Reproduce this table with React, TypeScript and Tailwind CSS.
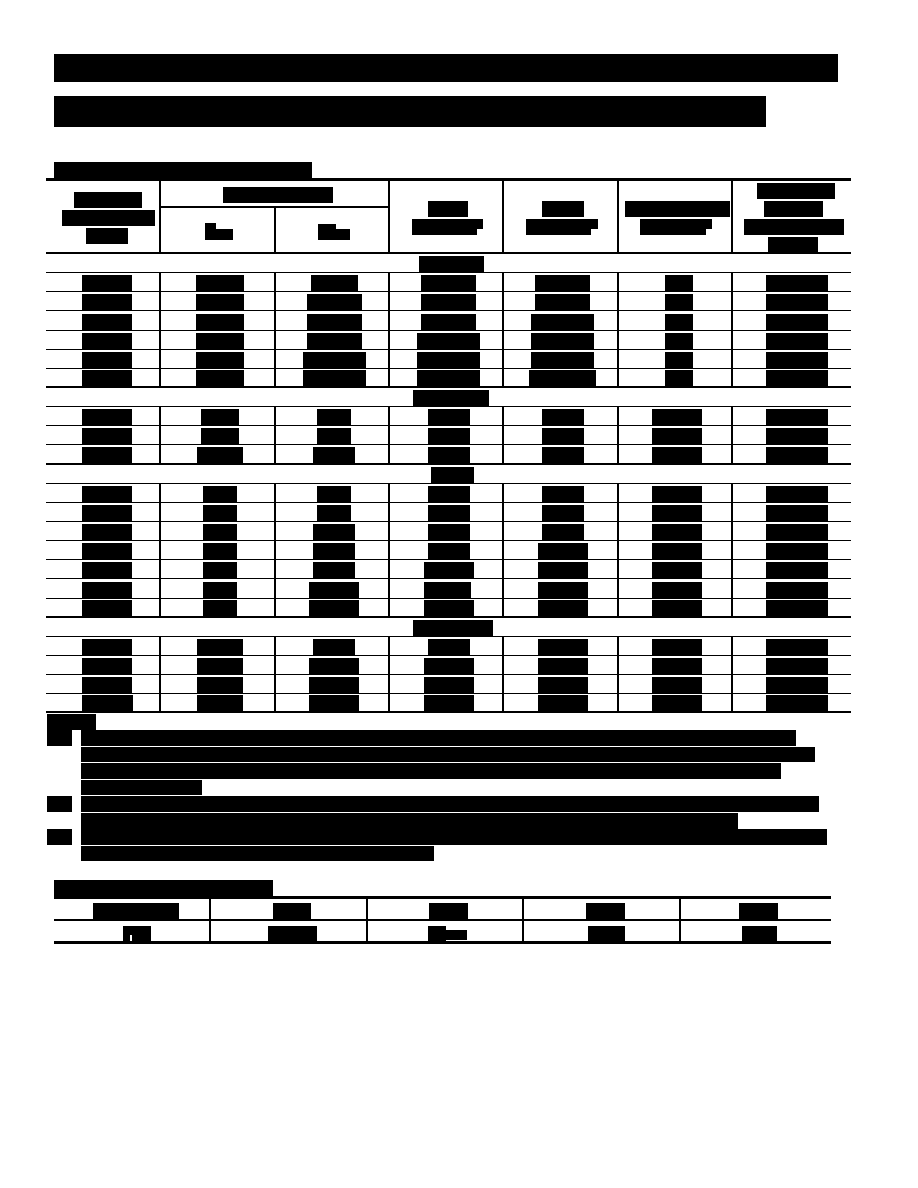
import type React from 'react';

// Redacted spec sheet: every text run is blacked out, so the page is drawn as bars.

const COLS = 'grid grid-cols-[113px_115px_114px_114px_115px_114px_120px]';

const A = 'ml-[36px] w-[50px]';
const G = 'ml-[33px] w-[62px]';

interface Section {
  head: string;
  rows: string[][];
}

const sections: Section[] = [
  {
    head: 'ml-[373px] w-[65px]',
    rows: [
      [A, 'ml-[35px] w-[48px]', 'ml-[35px] w-[47px]', 'ml-[31px] w-[55px]', 'ml-[31px] w-[55px]', 'ml-[46px] w-[28px]', G],
      [A, 'ml-[35px] w-[48px]', 'ml-[31px] w-[55px]', 'ml-[31px] w-[55px]', 'ml-[31px] w-[55px]', 'ml-[46px] w-[28px]', G],
      [A, 'ml-[35px] w-[48px]', 'ml-[31px] w-[55px]', 'ml-[31px] w-[55px]', 'ml-[27px] w-[63px]', 'ml-[46px] w-[28px]', G],
      [A, 'ml-[35px] w-[48px]', 'ml-[31px] w-[55px]', 'ml-[27px] w-[63px]', 'ml-[27px] w-[63px]', 'ml-[46px] w-[28px]', G],
      [A, 'ml-[35px] w-[48px]', 'ml-[27px] w-[63px]', 'ml-[27px] w-[63px]', 'ml-[27px] w-[63px]', 'ml-[46px] w-[28px]', G],
      [A, 'ml-[35px] w-[48px]', 'ml-[27px] w-[63px]', 'ml-[27px] w-[63px]', 'ml-[25px] w-[67px]', 'ml-[46px] w-[28px]', G],
    ],
  },
  {
    head: 'ml-[367px] w-[76px]',
    rows: [
      [A, 'ml-[40px] w-[38px]', 'ml-[41px] w-[34px]', 'ml-[38px] w-[42px]', 'ml-[38px] w-[42px]', 'ml-[33px] w-[50px]', G],
      [A, 'ml-[40px] w-[38px]', 'ml-[41px] w-[34px]', 'ml-[38px] w-[42px]', 'ml-[38px] w-[42px]', 'ml-[33px] w-[50px]', G],
      [A, 'ml-[36px] w-[46px]', 'ml-[37px] w-[42px]', 'ml-[38px] w-[42px]', 'ml-[38px] w-[42px]', 'ml-[33px] w-[50px]', G],
    ],
  },
  {
    head: 'ml-[385px] w-[43px]',
    rows: [
      [A, 'ml-[42px] w-[34px]', 'ml-[41px] w-[34px]', 'ml-[38px] w-[42px]', 'ml-[38px] w-[42px]', 'ml-[33px] w-[50px]', G],
      [A, 'ml-[42px] w-[34px]', 'ml-[41px] w-[34px]', 'ml-[38px] w-[42px]', 'ml-[38px] w-[42px]', 'ml-[33px] w-[50px]', G],
      [A, 'ml-[42px] w-[34px]', 'ml-[37px] w-[42px]', 'ml-[38px] w-[42px]', 'ml-[38px] w-[42px]', 'ml-[33px] w-[50px]', G],
      [A, 'ml-[42px] w-[34px]', 'ml-[37px] w-[42px]', 'ml-[38px] w-[42px]', 'ml-[34px] w-[50px]', 'ml-[33px] w-[50px]', G],
      [A, 'ml-[42px] w-[34px]', 'ml-[37px] w-[42px]', 'ml-[34px] w-[50px]', 'ml-[34px] w-[50px]', 'ml-[33px] w-[50px]', G],
      [A, 'ml-[42px] w-[34px]', 'ml-[33px] w-[50px]', 'ml-[34px] w-[47px]', 'ml-[34px] w-[50px]', 'ml-[33px] w-[50px]', G],
      [A, 'ml-[42px] w-[34px]', 'ml-[33px] w-[50px]', 'ml-[34px] w-[50px]', 'ml-[34px] w-[50px]', 'ml-[33px] w-[50px]', G],
    ],
  },
  {
    head: 'ml-[367px] w-[80px]',
    rows: [
      [A, 'ml-[36px] w-[46px]', 'ml-[37px] w-[42px]', 'ml-[38px] w-[42px]', 'ml-[34px] w-[50px]', 'ml-[33px] w-[50px]', G],
      [A, 'ml-[36px] w-[46px]', 'ml-[33px] w-[50px]', 'ml-[34px] w-[50px]', 'ml-[34px] w-[50px]', 'ml-[33px] w-[50px]', G],
      [A, 'ml-[36px] w-[46px]', 'ml-[33px] w-[50px]', 'ml-[34px] w-[50px]', 'ml-[34px] w-[50px]', 'ml-[33px] w-[50px]', G],
      ['ml-[36px] w-[51px]', 'ml-[36px] w-[46px]', 'ml-[33px] w-[50px]', 'ml-[34px] w-[50px]', 'ml-[34px] w-[50px]', 'ml-[33px] w-[50px]', G],
    ],
  },
];

// note lines: [line slot, bar] — marker shown on the first line of each note
const notes: { lines: [string, string][] }[] = [
  {
    lines: [
      ['h-[17px]', 'h-[16px] w-[715px]'],
      ['h-[16px]', 'h-[15px] w-[734px]'],
      ['h-[17px]', 'h-[16px] w-[700px]'],
      ['h-[16px]', 'h-[15px] w-[121px]'],
    ],
  },
  {
    lines: [
      ['h-[17px]', 'h-[16px] w-[738px]'],
      ['h-[16px]', 'h-[16px] w-[657px]'],
    ],
  },
  {
    lines: [
      ['h-[17px]', 'h-[16px] w-[746px]'],
      ['h-[16px]', 'h-[15px] w-[353px]'],
    ],
  },
];

const Bar: React.FC<{ className: string }> = ({ className }) => (
  <span className={`block bg-black ${className}`} />
);

const HeaderRow: React.FC = () => (
  <div className="flex h-[73px] border-b-2 border-black">
    {/* col 1 */}
    <div className="w-[113px] flex flex-col items-start gap-[2px] pt-[11px]">
      <Bar className="ml-[28px] w-[68px] h-[16px]" />
      <Bar className="ml-[16px] w-[93px] h-[16px]" />
      <Bar className="ml-[40px] w-[42px] h-[16px]" />
    </div>

    {/* col 2-3 grouped */}
    <div className="w-[229px] border-l-2 border-black flex flex-col">
      <div className="h-[27px] border-b-2 border-black pt-[6px]">
        <Bar className="ml-[62px] w-[110px] h-[16px]" />
      </div>
      <div className="flex flex-1">
        <div className="w-[113px] pt-[15px]">
          <div className="ml-[44px] flex items-end">
            <Bar className="w-[11px] h-[17px]" />
            <Bar className="w-[17px] h-[11px]" />
          </div>
        </div>
        <div className="w-[114px] border-l-2 border-black pt-[16px]">
          <div className="ml-[42px] flex items-end">
            <Bar className="w-[18px] h-[16px]" />
            <Bar className="w-[14px] h-[11px]" />
          </div>
        </div>
      </div>
    </div>

    {/* col 4 */}
    <div className="w-[114px] border-l-2 border-black flex flex-col items-start gap-[2px] pt-[20px]">
      <Bar className="ml-[38px] w-[40px] h-[16px]" />
      <div className="ml-[22px] flex items-start">
        <Bar className="w-[65px] h-[16px]" />
        <Bar className="w-[6px] h-[10px]" />
      </div>
    </div>

    {/* col 5 */}
    <div className="w-[115px] border-l-2 border-black flex flex-col items-start gap-[2px] pt-[20px]">
      <Bar className="ml-[38px] w-[42px] h-[16px]" />
      <div className="ml-[22px] flex items-start">
        <Bar className="w-[65px] h-[16px]" />
        <Bar className="w-[7px] h-[10px]" />
      </div>
    </div>

    {/* col 6 */}
    <div className="w-[114px] border-l-2 border-black flex flex-col items-start gap-[2px] pt-[20px]">
      <Bar className="ml-[6px] w-[105px] h-[16px]" />
      <div className="ml-[21px] flex items-start">
        <Bar className="w-[66px] h-[16px]" />
        <Bar className="w-[6px] h-[10px]" />
      </div>
    </div>

    {/* col 7 */}
    <div className="w-[120px] border-l-2 border-black flex flex-col items-start gap-[2px] pt-[2px]">
      <Bar className="ml-[24px] w-[78px] h-[16px]" />
      <Bar className="ml-[31px] w-[59px] h-[16px]" />
      <Bar className="ml-[11px] w-[100px] h-[16px]" />
      <Bar className="ml-[35px] w-[50px] h-[15px]" />
    </div>
  </div>
);

export default function App() {
  return (
    <div className="w-[918px] h-[1188px] bg-white overflow-hidden font-['Liberation_Sans',sans-serif]">
      {/* title */}
      <Bar className="mt-[54px] ml-[54px] w-[784px] h-[28px]" />
      <Bar className="mt-[14px] ml-[54px] w-[712px] h-[31px]" />

      {/* main table caption */}
      <Bar className="mt-[35px] ml-[54px] w-[258px] h-[16px]" />

      <div className="ml-[46px] w-[805px] border-t-[3px] border-black">
        <HeaderRow />
        {sections.map((sec, si) => (
          <div key={si}>
            <div className="h-[19.15px] border-b border-black flex items-end">
              <Bar className={`h-[16px] ${sec.head}`} />
            </div>
            {sec.rows.map((row, ri) => (
              <div
                key={ri}
                className={
                  ri === sec.rows.length - 1
                    ? `${COLS} h-[19.15px] border-b-2 border-black`
                    : `${COLS} h-[19.15px] border-b border-black`
                }
              >
                {row.map((cls, ci) => (
                  <div
                    key={ci}
                    className={ci === 0 ? 'flex items-end' : 'flex items-end border-l-2 border-black'}
                  >
                    <Bar className={`h-[16px] ${cls}`} />
                  </div>
                ))}
              </div>
            ))}
          </div>
        ))}
      </div>

      {/* notes */}
      <div className="ml-[47px] mt-[1px]">
        <Bar className="w-[49px] h-[16px]" />
        {notes.map((n, ni) => (
          <div key={ni} className="flex">
            <div className="w-[34px]">
              <Bar className="w-[25px] h-[16px]" />
            </div>
            <div>
              {n.lines.map(([slot, bar], li) => (
                <div key={li} className={slot}>
                  <Bar className={bar} />
                </div>
              ))}
            </div>
          </div>
        ))}
      </div>

      {/* second table */}
      <Bar className="mt-[18px] ml-[54px] w-[219px] h-[16px]" />
      <div className="ml-[54px] w-[777px] border-t-[3px] border-black">
        <div className="flex h-[22px] border-b-2 border-black">
          <div className="w-[155px] flex items-end">
            <Bar className="ml-[39px] w-[86px] h-[16px]" />
          </div>
          <div className="w-[157px] border-l-2 border-black flex items-end">
            <Bar className="ml-[62px] w-[38px] h-[16px]" />
          </div>
          <div className="w-[156px] border-l-2 border-black flex items-end">
            <Bar className="ml-[61px] w-[39px] h-[16px]" />
          </div>
          <div className="w-[157px] border-l-2 border-black flex items-end">
            <Bar className="ml-[62px] w-[39px] h-[16px]" />
          </div>
          <div className="w-[152px] border-l-2 border-black flex items-end">
            <Bar className="ml-[58px] w-[39px] h-[16px]" />
          </div>
        </div>
        <div className="flex h-[23px] border-b-[3px] border-black">
          <div className="w-[155px] flex items-end">
            <div className="ml-[69px] flex items-start">
              <Bar className="w-[7px] h-[15px]" />
              <Bar className="w-[2px] h-[9px]" />
              <Bar className="w-[19px] h-[15px]" />
            </div>
          </div>
          <div className="w-[157px] border-l-2 border-black flex items-end">
            <Bar className="ml-[57px] w-[49px] h-[15px]" />
          </div>
          <div className="w-[156px] border-l-2 border-black flex items-end">
            <div className="ml-[60px] flex items-start h-[15px]">
              <Bar className="w-[18px] h-[15px]" />
              <Bar className="mt-[4px] w-[21px] h-[10px]" />
            </div>
          </div>
          <div className="w-[157px] border-l-2 border-black flex items-end">
            <Bar className="ml-[64px] w-[37px] h-[15px]" />
          </div>
          <div className="w-[152px] border-l-2 border-black flex items-end">
            <Bar className="ml-[61px] w-[35px] h-[15px]" />
          </div>
        </div>
      </div>
    </div>
  );
}
